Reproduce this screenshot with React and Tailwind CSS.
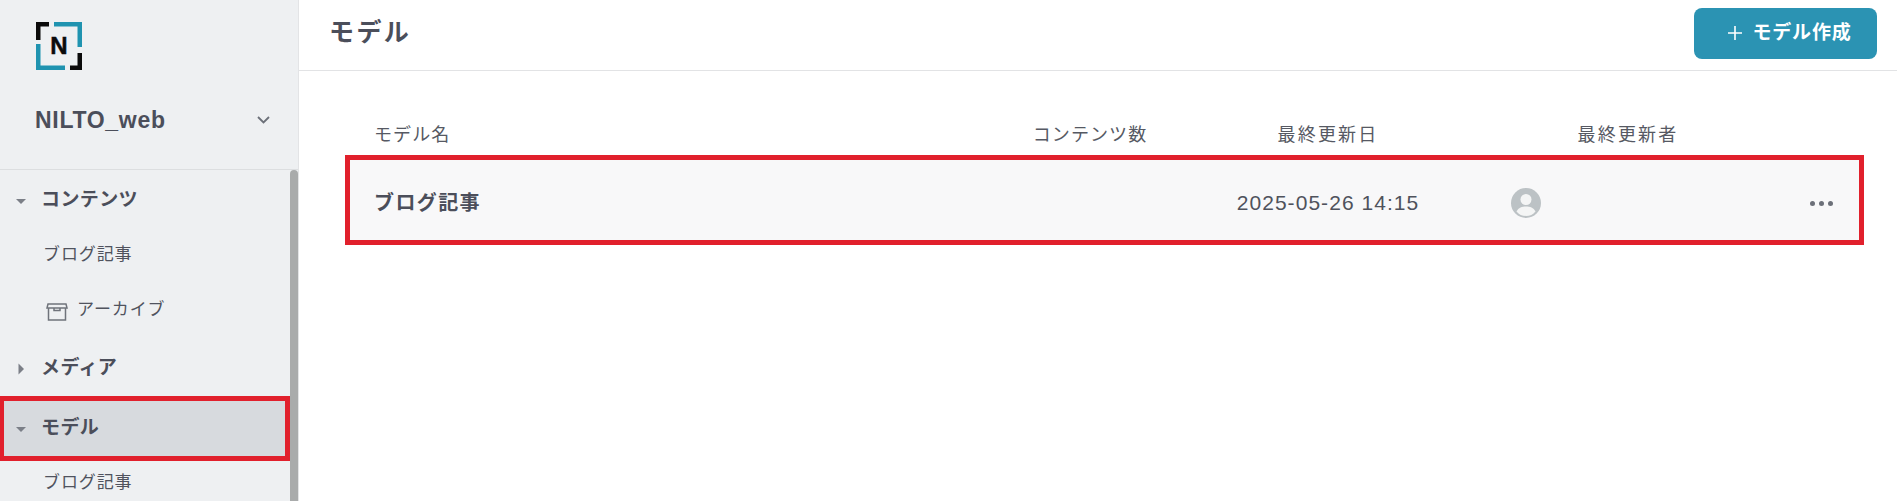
const font = { fontFamily: '"Liberation Sans", "Noto Sans CJK JP", sans-serif' };

function Caret({ open }) {
  return (
    <svg width="12" height="14" viewBox="0 0 12 14" className="shrink-0">
      {open ? <path d="M1 5h10L6 10z" fill="#7b7f87" /> : <path d="M3.500 1.500L9 7l-5.500 5.500z" fill="#7b7f87" />}
    </svg>
  );
}

function Logo() {
  return (
    <svg width="46" height="48" viewBox="0 0 46 48">
      <path d="M0 18V0h13v4.500H4.500V18z" fill="#0b0b0b" />
      <path d="M18 0h28v25h-4.500V4.500H18z" fill="#1f93b0" />
      <path d="M0 22h4.500v21.500H29V48H0z" fill="#1f93b0" />
      <path d="M46 31v17H34v-4.500h7.500V31z" fill="#0b0b0b" />
      <text x="23" y="32" textAnchor="middle" fontSize="24" fontWeight="700" stroke="#0b0b0b" strokeWidth="0.500" fill="#0b0b0b" fontFamily="Liberation Sans">N</text>
    </svg>
  );
}

function Group({ open, children, active, height }) {
  return (
    <div className={(active
      ? "bg-[#d7dade] border-[5px] border-l-[4px] border-[#e1202c] pl-[11px] gap-[14px] h-[65px] "
      : "pt-[4px] pl-[15px] gap-[14px] ") + "flex items-center text-[19px] font-bold text-[#4b4e5a] tracking-[0.4px]"}
      style={height ? { height } : undefined}>
      <Caret open={open} />
      <span>{children}</span>
    </div>
  );
}

function Item({ children, icon, height = 55 }) {
  return (
    <div className="flex items-center pl-[43px] text-[17px] text-[#50535e] tracking-[0.9px]" style={{ height }}>
      {icon}
      <span>{children}</span>
    </div>
  );
}

export default function App() {
  return (
    <div style={font} className="flex h-[501px] w-full overflow-hidden bg-white">
      <aside className="w-[299px] shrink-0 flex flex-col bg-[#eef0f2] border-r border-[#e3e4e6]">
        <div className="h-[170px] shrink-0 border-b border-[#dcdee0] pt-[22px] pl-[35px] pr-[28px]">
          <div className="pl-[1px]"><Logo /></div>
          <div className="mt-[33px] flex items-center justify-between">
            <span className="text-[23px] font-bold text-[#4b4e5a] tracking-[0.7px]">NILTO_web</span>
            <svg width="13" height="8" viewBox="0 0 13 8" fill="none" stroke="#6c7079" strokeWidth="1.800"><path d="M1 1l5.500 5.500L12 1" /></svg>
          </div>
        </div>
        <div className="flex flex-1 min-h-0">
          <nav className="flex-1 min-w-0">
            <Group open height={57}>コンテンツ</Group>
            <Item>ブログ記事</Item>
            <Item icon={
              <svg width="22" height="18" viewBox="0 0 22 18" fill="none" stroke="#6f737b" strokeWidth="1.500" className="mr-[9px] ml-[3px] mt-[4px]">
                <path d="M2 1h18l1 4H1zM2.500 5v12h17V5M8 5v2.500h6V5" />
              </svg>
            }>アーカイブ</Item>
            <Group height={59}>メディア</Group>
            <Group open active>モデル</Group>
            <Item height={44}>ブログ記事</Item>
          </nav>
          <div className="w-[8px] shrink-0 bg-[#a9abab] rounded-t-[4px]" />
        </div>
      </aside>
      <main className="flex-1 min-w-0 flex flex-col">
        <header className="h-[71px] shrink-0 border-b border-[#e2e3e5] flex items-center justify-between pl-[30px] pr-[20px]">
          <h1 className="text-[25px] font-bold text-[#4b4e5a] tracking-[2.400px] -mt-[4px]">モデル</h1>
          <button className="w-[183px] h-[51px] -mt-[4px] rounded-[8px] bg-[#2b93b3] text-white font-bold text-[19px] flex items-center justify-center gap-[9px] pl-[8px] tracking-[0.8px]">
            <svg width="16" height="16" viewBox="0 0 16 16" stroke="#fff" strokeWidth="1.600"><path d="M8 1v14M1 8h14" /></svg>
            <span>モデル作成</span>
          </button>
        </header>
        <section className="pl-[46px] pr-[33px] pt-[46px]">
          <div className="grid grid-cols-[626px_180px_296px_1fr] h-[36px] mb-[2px] items-center pl-[29px] text-[18px] text-[#565963] tracking-[1.100px]">
            <div>モデル名</div>
            <div className="text-center">コンテンツ数</div>
            <div className="text-center tracking-[2.200px]">最終更新日</div>
            <div className="text-center pr-[84px] tracking-[2.200px]">最終更新者</div>
          </div>
          <div className="grid grid-cols-[626px_180px_296px_1fr] h-[90px] items-center pl-[24px] pt-[6px] bg-[#f8f8f9] border-[5px] border-[#e1202c]">
            <div className="text-[20px] font-bold text-[#4b4e5a] tracking-[1.400px]">ブログ記事</div>
            <div />
            <div className="text-center text-[21px] text-[#4f525c] tracking-[1.050px]">2025-05-26 14:15</div>
            <div className="flex items-center justify-between pl-[35px] pr-[26px]">
              <svg width="30" height="30" viewBox="0 0 30 30">
                <circle cx="15" cy="15" r="15" fill="#bcc2c5" />
                <circle cx="15" cy="11.500" r="5.500" fill="#f4f5f5" />
                <path d="M5.500 23.500C7.500 19.500 11 18.500 15 18.500s7.500 1 9.500 5C22 26.500 19 28 15 28s-7-1.500-9.500-4.500z" fill="#f4f5f5" />
              </svg>
              <div className="flex gap-[4px]">
                <span className="w-[5px] h-[5px] rounded-full bg-[#6c7079]" />
                <span className="w-[5px] h-[5px] rounded-full bg-[#6c7079]" />
                <span className="w-[5px] h-[5px] rounded-full bg-[#6c7079]" />
              </div>
            </div>
          </div>
        </section>
      </main>
    </div>
  );
}
